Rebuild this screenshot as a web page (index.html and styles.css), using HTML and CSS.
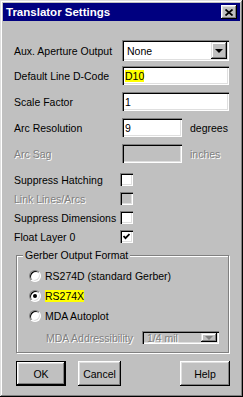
FILE: index.html
```html
<!DOCTYPE html>
<html lang="en">
<head>
<meta charset="UTF-8">
<title>Translator Settings</title>
<link rel="stylesheet" href="styles.css">
</head>
<body>
<div class="dialog">
    <div class="titlebar">
        <span class="title">Translator Settings</span>
        <span class="close">
            <svg width="8" height="7" viewBox="0 0 8 7"><path d="M0.5 0.5 L7.5 6.5 M7.5 0.5 L0.5 6.5" stroke="#000" stroke-width="1.7" fill="none"/></svg>
        </span>
    </div>
    <div class="content">
        <div class="field field-combo">
            <label>Aux. Aperture Output</label>
            <div class="combo"><span class="combo-text">None</span><span class="drop"><i></i></span></div>
        </div>
        <div class="field field-edit first">
            <label>Default Line D-Code</label>
            <div class="edit"><span class="sel">D10</span></div>
        </div>
        <div class="field field-edit">
            <label>Scale Factor</label>
            <div class="edit">1</div>
        </div>
        <div class="field field-edit">
            <label>Arc Resolution</label>
            <div class="edit short">9</div>
            <span class="unit">degrees</span>
        </div>
        <div class="field field-edit disabled">
            <label>Arc Sag</label>
            <div class="edit short"></div>
            <span class="unit">inches</span>
        </div>

        <div class="checks">
            <div class="check-row"><label>Suppress Hatching</label><span class="box"></span></div>
            <div class="check-row disabled"><label>Link Lines/Arcs</label><span class="box"></span></div>
            <div class="check-row"><label>Suppress Dimensions</label><span class="box"></span></div>
            <div class="check-row"><label>Float Layer 0</label><span class="box"><svg width="7" height="7" viewBox="0 0 7 7"><path d="M0.5 3 L2.5 5.2 L6.5 1" stroke="#000" stroke-width="1.8" fill="none"/></svg></span></div>
        </div>

        <fieldset class="group">
            <legend>Gerber Output Format</legend>
            <div class="radio-row"><span class="radio"></span><span>RS274D (standard Gerber)</span></div>
            <div class="radio-row"><span class="radio on"></span><span class="sel">RS274X</span></div>
            <div class="radio-row"><span class="radio"></span><span>MDA Autoplot</span></div>
            <div class="addr-row disabled">
                <label>MDA Addressibility</label>
                <div class="combo small"><span class="combo-text">1/4 mil</span><span class="drop"><i></i></span></div>
            </div>
        </fieldset>

        <div class="buttons">
            <button class="btn default">OK</button>
            <button class="btn cancel">Cancel</button>
            <button class="btn help">Help</button>
        </div>
    </div>
</div>
</body>
</html>
```

FILE: styles.css
```css
* {
    margin: 0;
    padding: 0;
    box-sizing: border-box;
}

body {
    background: #c0c0c0;
    font-family: "Liberation Sans", Arial, sans-serif;
    font-size: 10.5px;
    color: #000;
    white-space: nowrap;
}

.dialog {
    width: 243px;
    height: 397px;
    padding: 3px;
    background: #c0c0c0;
    box-shadow: inset -1px -1px #000, inset 1px 1px #dfdfdf, inset -2px -2px #808080, inset 2px 2px #fff;
}

.titlebar {
    display: flex;
    align-items: center;
    justify-content: space-between;
    height: 18px;
    padding: 0 3px 0 3px;
    background: #000080;
    color: #fff;
    font-weight: bold;
    font-size: 11.5px;
}

.close {
    display: flex;
    align-items: center;
    justify-content: center;
    width: 16px;
    height: 14px;
    background: #c0c0c0;
    box-shadow: inset -1px -1px #000, inset 1px 1px #fff, inset -2px -2px #808080, inset 2px 2px #dfdfdf;
}

.content {
    padding: 0 10px 0 11px;
}

.field {
    display: flex;
    align-items: center;
}

.field label {
    width: 108px;
}

.field-combo {
    margin-top: 19px;
    height: 21px;
}

.field-edit {
    margin-top: 7px;
    height: 19px;
}

.field-edit.first {
    margin-top: 5px;
}

.edit,
.combo {
    display: flex;
    align-items: center;
    width: 107px;
    height: 100%;
    padding: 2px 3px;
    background: #fff;
    box-shadow: inset 1px 1px #808080, inset 2px 2px #000, inset -1px -1px #fff, inset -2px -2px #dfdfdf;
}

.edit.short {
    width: 60px;
}

.combo {
    padding: 2px;
}

.combo-text {
    flex: 1;
    padding-left: 3px;
}

.drop {
    display: flex;
    align-items: center;
    justify-content: center;
    width: 16px;
    height: 100%;
    background: #c0c0c0;
    box-shadow: inset -1px -1px #000, inset 1px 1px #dfdfdf, inset -2px -2px #808080, inset 2px 2px #fff;
}

.drop i {
    display: block;
    border-left: 4px solid transparent;
    border-right: 4px solid transparent;
    border-top: 4px solid #000;
}

.sel {
    background: #ffff00;
    color: #000;
}

.unit {
    margin-left: 8px;
}

.disabled label,
.disabled .unit,
.disabled .combo-text {
    color: #808080;
    text-shadow: 1px 1px #fff;
}

.disabled .edit,
.disabled .combo {
    background: #c0c0c0;
}

.disabled .drop i {
    border-top-color: #808080;
}

.checks {
    margin-top: 7px;
}

.check-row {
    display: flex;
    align-items: center;
    height: 19px;
}

.check-row label {
    width: 106px;
}

.box {
    display: flex;
    align-items: center;
    justify-content: center;
    width: 13px;
    height: 13px;
    background: #fff;
    box-shadow: inset 1px 1px #808080, inset 2px 2px #000, inset -1px -1px #fff, inset -2px -2px #dfdfdf;
}

.disabled .box {
    background: #c0c0c0;
}

.group {
    margin: 3px 0 0 2px;
    width: 213px;
    padding: 4px 0 8px 0;
    border: 1px solid #808080;
    box-shadow: inset 1px 1px #fff, 1px 1px #fff;
}

.group legend {
    margin-left: 6px;
    padding: 0 2px;
    line-height: 13px;
    background: #c0c0c0;
}

.radio-row {
    display: flex;
    align-items: center;
    height: 20px;
    padding-left: 12px;
}

.radio {
    display: flex;
    align-items: center;
    justify-content: center;
    width: 12px;
    height: 12px;
    margin-right: 4px;
    border-radius: 50%;
    background: #fff;
    border: 1px solid;
    border-color: #808080 #fff #fff #808080;
    box-shadow: inset 1px 1px #000, inset -1px -1px #dfdfdf;
}

.radio.on:after {
    content: '';
    width: 4px;
    height: 4px;
    border-radius: 50%;
    background: #000;
}

.addr-row {
    display: flex;
    align-items: center;
    height: 13px;
    margin-top: 5px;
    padding-left: 29px;
}

.addr-row label {
    width: 96px;
}

.combo.small {
    width: 77px;
    height: 13px;
}

.buttons {
    display: flex;
    margin-top: 8px;
    padding-left: 2px;
}

.btn {
    width: 50px;
    height: 25px;
    border: none;
    background: #c0c0c0;
    font-family: "Liberation Sans", Arial, sans-serif;
    font-size: 10.5px;
    color: #000;
    box-shadow: inset -1px -1px #000, inset 1px 1px #fff, inset -2px -2px #808080, inset 2px 2px #dfdfdf;
}

.btn.default {
    border: 1px solid #000;
}

.btn.cancel {
    width: 43px;
    margin-left: 12px;
}

.btn.help {
    margin-left: auto;
}
```
